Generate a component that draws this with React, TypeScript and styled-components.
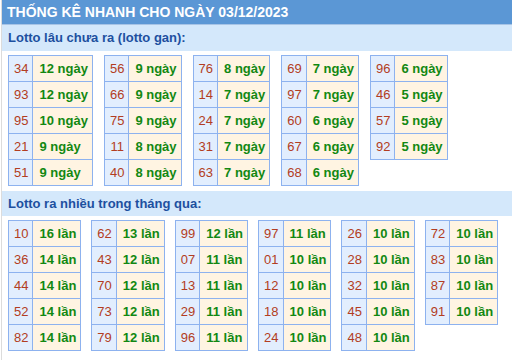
import React from "react";
import styled, { createGlobalStyle } from "styled-components";

const GlobalStyle = createGlobalStyle`
  html, body { margin: 0; padding: 0; background: #ffffff; }
  body { font-family: "Liberation Sans", Arial, sans-serif; }
`;

const Page = styled.div`
  margin-left: 1px;
  border-left: 1px solid #dcdcdc;
  min-height: 360px;
  box-sizing: border-box;
`;

const Header = styled.div`
  height: 24px;
  line-height: 24px;
  padding-left: 5px;
  background: #5b97d5;
  border-bottom: 1px solid #a7c4e6;
  color: #ffffff;
  font-weight: bold;
  font-size: 14px;
  white-space: nowrap;
  overflow: hidden;
`;

const SectionTitle = styled.div<{ $gap?: number; $h?: number }>`
  margin-top: ${(p) => p.$gap ?? 0}px;
  height: ${(p) => p.$h ?? 26}px;
  line-height: ${(p) => p.$h ?? 26}px;
  padding-left: 6px;
  background: #d4e8fb;
  color: #1d50a0;
  font-weight: bold;
  font-size: 13px;
`;

const TableRow = styled.div<{ $gap: number }>`
  display: flex;
  align-items: flex-start;
  gap: ${(p) => p.$gap}px;
  padding: 4px 0 0 6px;
`;

const Table = styled.table`
  border-collapse: collapse;
  font-family: "Liberation Sans", Arial, sans-serif;
  font-size: 13px;
`;

const NumCell = styled.td`
  border: 1px solid #8db2ef;
  background: #e2eefe;
  color: #b23d22;
  height: 25px;
  padding: 0 4px 0 5px;
  text-align: center;
`;

const CountCell = styled.td`
  border: 1px solid #8db2ef;
  background: #fff4e2;
  color: #128812;
  font-weight: bold;
  height: 25px;
  padding: 0 4px 0 6px;
  text-align: left;
  white-space: nowrap;
`;

type Entry = [string, number];

const gan: Entry[][] = [
  [["34", 12], ["93", 12], ["95", 10], ["21", 9], ["51", 9]],
  [["56", 9], ["66", 9], ["75", 9], ["11", 8], ["40", 8]],
  [["76", 8], ["14", 7], ["24", 7], ["31", 7], ["63", 7]],
  [["69", 7], ["97", 7], ["60", 6], ["67", 6], ["68", 6]],
  [["96", 6], ["46", 5], ["57", 5], ["92", 5]],
];

const nhieu: Entry[][] = [
  [["10", 16], ["36", 14], ["44", 14], ["52", 14], ["82", 14]],
  [["62", 13], ["43", 12], ["70", 12], ["73", 12], ["79", 12]],
  [["99", 12], ["07", 11], ["13", 11], ["29", 11], ["96", 11]],
  [["97", 11], ["01", 10], ["12", 10], ["18", 10], ["24", 10]],
  [["26", 10], ["28", 10], ["32", 10], ["45", 10], ["48", 10]],
  [["72", 10], ["83", 10], ["87", 10], ["91", 10]],
];

const LottoTable: React.FC<{ rows: Entry[]; unit: string }> = ({ rows, unit }) => (
  <Table>
    <tbody>
      {rows.map(([n, c]) => (
        <tr key={n}>
          <NumCell>{n}</NumCell>
          <CountCell>
            {c} {unit}
          </CountCell>
        </tr>
      ))}
    </tbody>
  </Table>
);

export default function App() {
  return (
    <>
      <GlobalStyle />
      <Page>
        <Header>THỐNG KÊ NHANH CHO NGÀY 03/12/2023</Header>
        <SectionTitle>Lotto lâu chưa ra (lotto gan):</SectionTitle>
        <TableRow $gap={11}>
          {gan.map((t, i) => (
            <LottoTable key={i} rows={t} unit="ngày" />
          ))}
        </TableRow>
        <SectionTitle $gap={5} $h={25}>
          Lotto ra nhiều trong tháng qua:
        </SectionTitle>
        <TableRow $gap={10}>
          {nhieu.map((t, i) => (
            <LottoTable key={i} rows={t} unit="lần" />
          ))}
        </TableRow>
      </Page>
    </>
  );
}
